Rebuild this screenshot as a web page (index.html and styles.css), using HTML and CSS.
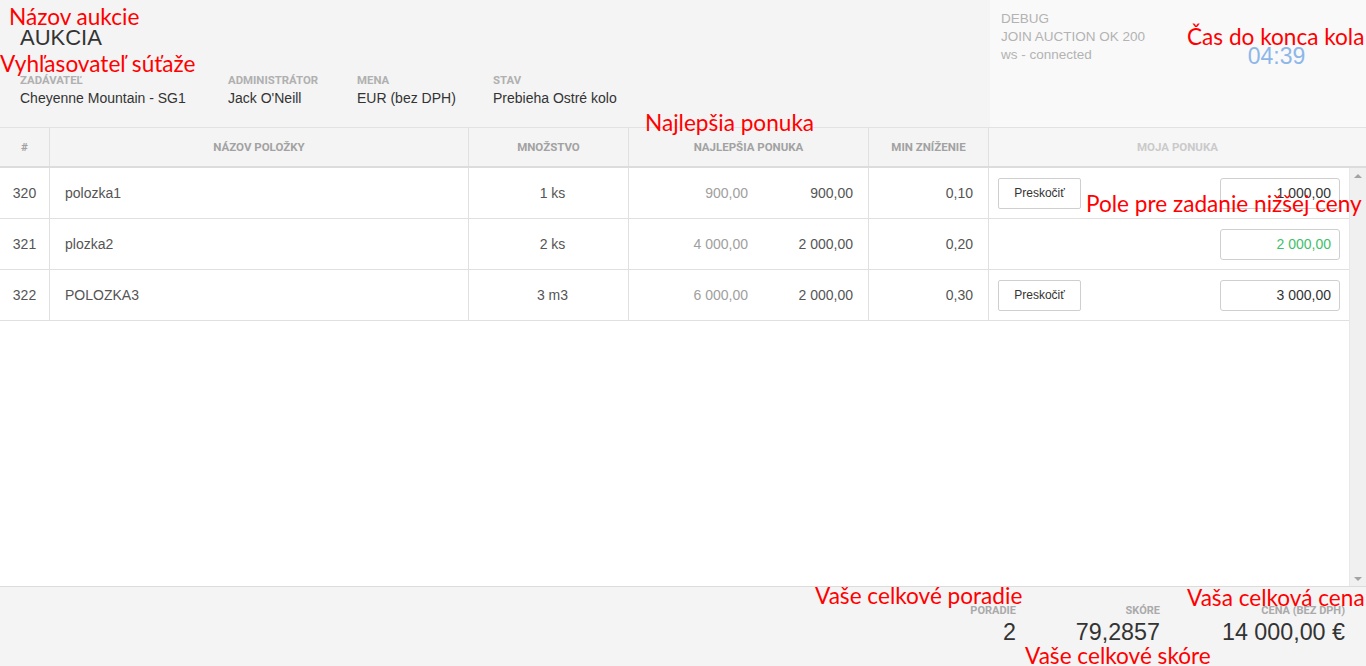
FILE: index.html
```html
<!DOCTYPE html>
<html lang="sk">
<head>
<meta charset="utf-8">
<title>Aukcia</title>
<link rel="stylesheet" href="styles.css">
</head>
<body>
<div class="app">
  <header class="top">
    <div class="info">
      <div class="title">AUKCIA</div>
      <div class="meta">
        <div class="meta-item w1"><div class="label">ZADÁVATEĽ</div><div class="value">Cheyenne Mountain - SG1</div></div>
        <div class="meta-item w2"><div class="label">ADMINISTRÁTOR</div><div class="value">Jack O'Neill</div></div>
        <div class="meta-item w3"><div class="label">MENA</div><div class="value">EUR (bez DPH)</div></div>
        <div class="meta-item"><div class="label">STAV</div><div class="value">Prebieha Ostré kolo</div></div>
      </div>
    </div>
    <div class="side">
      <div class="debug">
        <div>DEBUG</div>
        <div>JOIN AUCTION OK 200</div>
        <div>ws - connected</div>
      </div>
      <div class="timer">04:39</div>
    </div>
  </header>

  <div class="grid thead">
    <div class="th">#</div>
    <div class="th">NÁZOV POLOŽKY</div>
    <div class="th">MNOŽSTVO</div>
    <div class="th">NAJLEPŠIA PONUKA</div>
    <div class="th">MIN ZNÍŽENIE</div>
    <div class="th th-mine">MOJA PONUKA</div>
  </div>

  <div class="tbody-wrap">
    <div class="tbody">
      <div class="grid row">
        <div class="td c-num">320</div>
        <div class="td c-name">polozka1</div>
        <div class="td c-qty">1 ks</div>
        <div class="td c-best"><span class="best-old">900,00</span><span class="best-cur">900,00</span></div>
        <div class="td c-min">0,10</div>
        <div class="td c-mine"><button class="btn">Preskočiť</button><input class="price" type="text" value="1 000,00"></div>
      </div>
      <div class="grid row">
        <div class="td c-num">321</div>
        <div class="td c-name">plozka2</div>
        <div class="td c-qty">2 ks</div>
        <div class="td c-best"><span class="best-old">4 000,00</span><span class="best-cur">2 000,00</span></div>
        <div class="td c-min">0,20</div>
        <div class="td c-mine"><input class="price price-ok" type="text" value="2 000,00"></div>
      </div>
      <div class="grid row">
        <div class="td c-num">322</div>
        <div class="td c-name">POLOZKA3</div>
        <div class="td c-qty">3 m3</div>
        <div class="td c-best"><span class="best-old">6 000,00</span><span class="best-cur">2 000,00</span></div>
        <div class="td c-min">0,30</div>
        <div class="td c-mine"><button class="btn">Preskočiť</button><input class="price" type="text" value="3 000,00"></div>
      </div>
    </div>
    <div class="scrollbar"><span class="arrow up"></span><span class="arrow down"></span></div>
  </div>

  <footer class="totals">
    <div class="total t-rank"><div class="label">PORADIE</div><div class="big">2</div></div>
    <div class="total t-score"><div class="label">SKÓRE</div><div class="big">79,2857</div></div>
    <div class="total t-price"><div class="label">CENA (BEZ DPH)</div><div class="big">14 000,00 €</div></div>
  </footer>

  <div class="note n1">Názov aukcie</div>
  <div class="note n2">Vyhľasovateľ súťaže</div>
  <div class="note n3">Najlepšia ponuka</div>
  <div class="note n4">Čas do konca kola</div>
  <div class="note n5">Pole pre zadanie nižšej ceny</div>
  <div class="note n6">Vaše celkové poradie</div>
  <div class="note n7">Vaša celková cena</div>
  <div class="note n8">Vaše celkové skóre</div>
</div>
</body>
</html>
```
FILE: styles.css
```css
* { box-sizing: border-box; }
html, body { margin: 0; padding: 0; }
body {
  font-family: "Liberation Sans", Arial, sans-serif;
  font-size: 14px;
  color: #555;
  background: #fff;
}
.app {
  position: relative;
  height: 666px;
  width: 1366px;
  display: flex;
  flex-direction: column;
  overflow: hidden;
}

/* top header */
.top {
  height: 128px;
  flex: 0 0 128px;
  display: flex;
  border-bottom: 1px solid #e2e2e2;
  background: #f4f4f4;
}
.info {
  width: 990px;
  padding: 25px 0 0 20px;
}
.title {
  font-size: 22px;
  line-height: 26px;
  color: #333;
}
.meta {
  display: flex;
  margin-top: 22px;
}
.meta-item.w1 { width: 208px; }
.meta-item.w2 { width: 129px; }
.meta-item.w3 { width: 136px; }
.label {
  font-family: Roboto, "Liberation Sans", sans-serif;
  font-weight: 700;
  font-size: 11.4px;
  line-height: 14px;
  color: #b0b0b0;
  white-space: nowrap;
}
.value {
  margin-top: 2px;
  font-size: 14px;
  line-height: 18px;
  color: #333;
  white-space: nowrap;
}
.side {
  flex: 1;
  display: flex;
  background: #f9f9f9;
}
.debug {
  flex: 1;
  padding: 10px 0 0 11px;
  font-size: 13.5px;
  line-height: 18px;
  color: #b3b3b3;
  white-space: nowrap;
}
.timer {
  width: 179px;
  padding-top: 43px;
  text-align: center;
  font-size: 23px;
  line-height: 26px;
  color: #8db7e9;
}

/* table */
.grid {
  display: grid;
  grid-template-columns: 50px 419px 160px 240px 120px 1fr;
}
.thead {
  flex: 0 0 40px;
  height: 40px;
  background: #f4f4f4;
  border-bottom: 2px solid #dcdcdc;
}
.th {
  display: flex;
  align-items: center;
  justify-content: center;
  border-right: 1px solid #e0e0e0;
  font-family: Roboto, "Liberation Sans", sans-serif;
  font-weight: 700;
  font-size: 11.5px;
  color: #a2a2a2;
  white-space: nowrap;
}
.th-mine {
  border-right: none;
  color: #cacaca;
  background: #f6f6f6;
}
.tbody-wrap {
  flex: 1;
  display: flex;
  min-height: 0;
}
.tbody {
  flex: 1;
}
.row {
  height: 51px;
  border-bottom: 1px solid #e0e0e0;
}
.td {
  display: flex;
  align-items: center;
  border-right: 1px solid #e0e0e0;
  color: #555;
  white-space: nowrap;
}
.c-num { justify-content: center; }
.c-name { padding-left: 15px; }
.c-qty { justify-content: center; padding-left: 8px; }
.c-best { justify-content: flex-end; padding-right: 15px; }
.best-old { color: #a0a0a0; }
.best-cur { width: 105px; text-align: right; color: #555; }
.c-min { justify-content: flex-end; padding-right: 15px; }
.c-mine {
  border-right: none;
  padding: 0 9px;
  justify-content: space-between;
}
.btn {
  width: 83px;
  height: 31px;
  margin: 0;
  padding: 0;
  background: #fff;
  border: 1px solid #cfcfcf;
  border-radius: 2px;
  font-family: "Liberation Sans", Arial, sans-serif;
  font-size: 12px;
  color: #333;
}
.price {
  width: 120px;
  height: 31px;
  margin: 0 0 0 auto;
  padding: 0 8px;
  border: 1px solid #cfcfcf;
  border-radius: 3px;
  background: #fff;
  text-align: right;
  font-family: "Liberation Sans", Arial, sans-serif;
  font-size: 14px;
  color: #333;
}
.price-ok { color: #3fc06a; }
.scrollbar {
  position: relative;
  width: 17px;
  flex: 0 0 17px;
  background: #f0f0f0;
  border-left: 1px solid #e8e8e8;
}
.arrow {
  position: absolute;
  left: 4px;
  width: 0;
  height: 0;
  border-left: 4px solid transparent;
  border-right: 4px solid transparent;
}
.arrow.up { top: 6px; border-bottom: 4px solid #a3a3a3; }
.arrow.down { bottom: 5px; border-top: 4px solid #a3a3a3; }

/* footer */
.totals {
  flex: 0 0 80px;
  height: 80px;
  display: flex;
  justify-content: flex-end;
  padding: 17px 21px 0 0;
  background: #f4f4f4;
  border-top: 1px solid #dcdcdc;
}
.total { text-align: right; }
.t-score { width: 144px; }
.t-price { width: 185px; }
.total .label { font-size: 11px; color: #aaa; }
.big {
  margin-top: 1px;
  font-size: 23.3px;
  line-height: 26px;
  color: #333;
  white-space: nowrap;
}

/* annotations */
.note {
  position: absolute;
  font-family: Lato, "Open Sans", sans-serif;
  font-size: 22.6px;
  line-height: 22px;
  color: #ff0000;
  white-space: nowrap;
}
.n1 { left: 9px; top: 6px; }
.n2 { left: 0; top: 53px; }
.n3 { left: 645px; top: 112px; }
.n4 { left: 1187px; top: 26px; }
.n5 { left: 1086px; top: 193px; }
.n6 { left: 815px; top: 585px; }
.n7 { left: 1187px; top: 587px; }
.n8 { left: 1025px; top: 645px; }
```
